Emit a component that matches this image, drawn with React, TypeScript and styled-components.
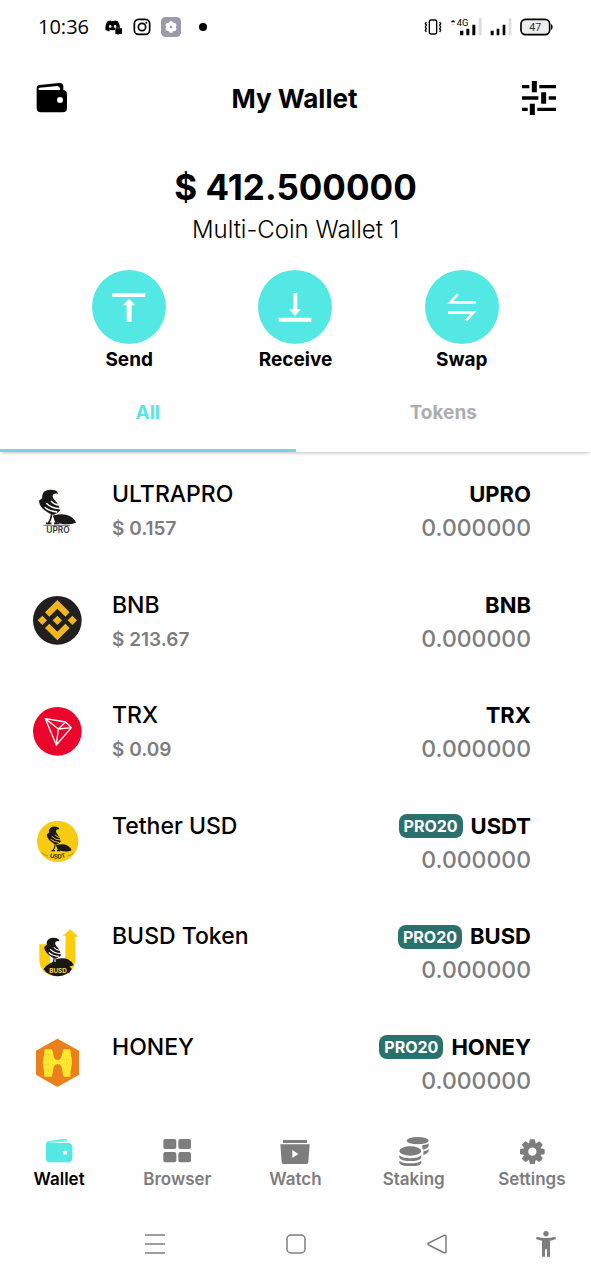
import React from "react";
import styled, { createGlobalStyle } from "styled-components";
import { FaDiscord } from "react-icons/fa";

const teal = "#54e8e4";
const grey = "#7d7d7d";

const GlobalStyle = createGlobalStyle`
  * { box-sizing: border-box; }
  body { margin: 0; background: #fefefe; color: #000; font-family: Inter, "Noto Sans", sans-serif; }
  button { font: inherit; color: inherit; background: none; border: 0; padding: 0; cursor: pointer; }
  svg { display: block; flex: none; }
`;

const Screen = styled.div`
  display: flex;
  flex-direction: column;
  min-height: 100vh;
`;

const StatusBar = styled.div`
  display: flex;
  align-items: center;
  justify-content: space-between;
  height: 54px;
  padding: 0 38px;
`;

const StatusGroup = styled.div<{ $gap: number }>`
  display: flex;
  align-items: center;
  gap: ${(p) => p.$gap}px;
`;

const Clock = styled.time`
  font-family: "Open Sans", sans-serif;
  font-size: 20px;
  line-height: 24px;
  margin-right: 6px;
`;

const Header = styled.header`
  display: flex;
  align-items: center;
  justify-content: space-between;
  height: 88px;
  padding: 0 34px 0 36px;
`;

const Title = styled.h1`
  margin: 0;
  padding-top: 2px;
  font-size: 26px;
  line-height: 32px;
  font-weight: 700;
`;

const Summary = styled.section`
  display: flex;
  flex-direction: column;
  align-items: center;
  padding-top: 20px;
`;

const Balance = styled.div`
  font-size: 35px;
  line-height: 50px;
  font-weight: 700;
`;

const WalletName = styled.div`
  font-size: 24px;
  line-height: 36px;
  font-weight: 300;
`;

const Actions = styled.div`
  display: grid;
  grid-template-columns: repeat(3, 1fr);
  padding: 22px 46px 0;
`;

const Action = styled.button`
  display: flex;
  flex-direction: column;
  align-items: center;
  font-size: 19px;
  line-height: 32px;
  font-weight: 700;
`;

const ActionDisc = styled.span`
  display: block;
  width: 74px;
  height: 74px;
  border-radius: 50%;
  background: ${teal};
`;

const Tabs = styled.div`
  display: grid;
  grid-template-columns: 1fr 1fr;
  height: 76px;
  box-shadow: 0 3px 3px -2px rgba(0, 0, 0, 0.25);
`;

const Tab = styled.button<{ $active?: boolean }>`
  padding-bottom: ${(p) => (p.$active ? 0 : 3)}px;
  border-bottom: ${(p) => (p.$active ? "3px solid #70d8d6" : "0")};
  color: ${(p) => (p.$active ? teal : "#adadad")};
  font-size: 19px;
  font-weight: 700;
`;

const TokenList = styled.ul`
  display: grid;
  grid-auto-rows: 1fr;
  flex: 1;
  margin: 0;
  padding: 3px 60px 0 33px;
  list-style: none;
`;

const TokenRow = styled.li`
  display: flex;
  align-items: center;
  min-height: 90px;
`;

const Details = styled.div<{ $end?: boolean }>`
  display: flex;
  flex-direction: column;
  align-items: ${(p) => (p.$end ? "flex-end" : "flex-start")};
  flex: ${(p) => (p.$end ? "none" : "1")};
  height: 68px;
  padding: 2px 0 0 ${(p) => (p.$end ? 0 : 30)}px;
`;

const TokenName = styled.div`
  font-size: 23px;
  line-height: 33px;
  font-weight: 500;
`;

const TokenPrice = styled.div`
  color: ${grey};
  font-size: 19px;
  line-height: 35px;
  font-weight: 600;
`;

const SymbolLine = styled.div`
  display: flex;
  align-items: center;
  gap: 8px;
  font-size: 22px;
  line-height: 33px;
  font-weight: 700;
`;

const Badge = styled.span`
  padding: 0 5px;
  border-radius: 8px;
  background: #2a716d;
  color: #fff;
  font-size: 16px;
  line-height: 24px;
  font-weight: 700;
`;

const Amount = styled.div`
  color: ${grey};
  font-size: 23px;
  line-height: 35px;
  font-weight: 500;
`;

const BottomNav = styled.nav`
  display: grid;
  grid-template-columns: repeat(5, 1fr);
  height: 90px;
  padding-top: 18px;
`;

const NavItem = styled.button<{ $active?: boolean }>`
  display: flex;
  flex-direction: column;
  align-items: center;
  align-self: start;
  color: ${(p) => (p.$active ? "#000" : grey)};
  font-size: 17px;
  line-height: 26px;
  font-weight: 600;
`;

const SystemNav = styled.div`
  display: grid;
  grid-template-columns: 84fr 141fr 141fr 141fr 84fr;
  height: 72px;
`;

const SystemButton = styled.button<{ $first?: boolean }>`
  display: flex;
  align-items: center;
  justify-content: center;
  grid-column-start: ${(p) => (p.$first ? 2 : "auto")};
  &:last-child { padding-right: 6px; }
`;

const VibrateIcon = () => (
  <svg width="18" height="18" viewBox="386 52 54 54" fill="none" stroke="#000" strokeWidth="4">
    <rect x="402" y="58" width="22" height="42" rx="5" />
    <path d="M393 64l-3 5 3 5-3 5 3 5-3 5 3 5M433 64l3 5-3 5 3 5-3 5 3 5-3 5" />
  </svg>
);

const MobileSignal = () => (
  <svg width="32" height="18" viewBox="461 52 96 54">
    <path d="M463 65l7-7 7 7z" />
    <path d="M463 70l7 6 7-6z" fill="#ddd" />
    <text x="481" y="76" fontFamily="Roboto, sans-serif" fontSize="28">4G</text>
    <path d="M491 90h10v14h-10zM510 84h9v20h-9zM528 72h9v32h-9z" />
    <path d="M547 53h9v51h-9z" fill="#ddd" />
  </svg>
);

const Signal = () => (
  <svg width="22" height="18" viewBox="583 52 66 54">
    <path d="M585 90h9v14h-9zM603 84h8v20h-8zM621 72h8v32h-8z" />
    <path d="M639 53h8v51h-8z" fill="#ddd" />
  </svg>
);

const Battery = () => (
  <svg width="33" height="18" viewBox="674 52 99 54">
    <rect x="677" y="56" width="86" height="46" rx="14" fill="#eee" stroke="#000" strokeWidth="5" />
    <path d="M767 70q5 2 5 9t-5 9z" />
    <text x="720" y="90" textAnchor="middle" fontFamily="Roboto, sans-serif" fontSize="32" fill="#333">47</text>
  </svg>
);

const NotificationIcons = () => (
  <>
    <svg width="18" height="18" viewBox="315 52 54 54">
      <FaDiscord x={314} y={52} size={48} />
      <path d="M346 83h20v17h-9l-4 4v-4h-7z" stroke="#fefefe" strokeWidth="3" paintOrder="stroke" />
    </svg>
    <svg width="18" height="18" viewBox="398 52 54 54" fill="none" stroke="#000" strokeWidth="5">
      <rect x="402" y="56" width="46" height="45" rx="13" />
      <circle cx="425" cy="79" r="11" />
      <circle cx="438" cy="66" r="3" fill="#000" stroke="none" />
    </svg>
    <svg width="20" height="20" viewBox="480 48 60 60">
      <rect x="480" y="48" width="60" height="60" rx="14" fill="#9b9ba7" />
      <g fill="#fff">
        <circle cx="510" cy="78" r="15" />
        {[0, 60, 120, 180, 240, 300].map((a) => (
          <circle key={a} cx="510" cy="66" r="6" transform={`rotate(${a} 510 78)`} />
        ))}
      </g>
      <circle cx="510" cy="78" r="4" fill="#9b9ba7" />
    </svg>
    <svg width="20" height="8" viewBox="0 0 20 8"><circle cx="12" cy="4" r="4" /></svg>
  </>
);

const WalletIcon = () => (
  <svg width="32" height="32" viewBox="108 248 96 96">
    <path d="M110 266q0-8 9-9l58-6q12-1 13 9v12q11 2 11 12v42q0 13-13 13h-65q-13 0-13-13z" />
    <path d="M119 265l53-5q7 0 8 8v4h-60q-5-1-5-4 1-3 4-3z" fill="#fefefe" />
    <circle cx="180" cy="302" r="9" fill="#fefefe" />
  </svg>
);

const TuneIcon = () => (
  <svg width="36" height="36" viewBox="676 240 108 108" fill="none" stroke="#000">
    <path strokeWidth="10" d="M679 260h22M731 260h50M679 294h49M759 294h22M679 328h17M725 328h56" />
    <path strokeWidth="15" d="M716 243v34M744 277v34M710 311v34" />
  </svg>
);

const SendIcon = () => (
  <svg width="74" height="74" viewBox="36 330 222 222" fill="#fff">
    <path d="M97 399h99v12H97zM147 416l19 20h-11v50h-15v-50h-11z" />
  </svg>
);

const ReceiveIcon = () => (
  <svg width="74" height="74" viewBox="536 330 222 222" fill="#fff">
    <path d="M598 473h98v12h-98zM641 399h13v49h11l-18 20-18-20h12z" />
  </svg>
);

const SwapIcon = () => (
  <svg width="74" height="74" viewBox="1035 330 222 222" fill="none" stroke="#fff" strokeWidth="8">
    <path d="M1187 427h-76l22-24M1104 458h76l-22 24" />
  </svg>
);

const Bird = ({ stripes }: { stripes: string }) => (
  <>
    <path
      fill="#191817"
      d="M174 68q-15-2-16 6-1 6 5 12 13 11 17 33-8 8-20 13-10-2-22-11-13-9-18-20-4-8-2-13 5-3 9-7-3-13 7-20 10-7 25-4 13 1 15 11z
         M158 134q32-9 51 1 15 8 19 20-12 5-26 5-22 0-32-8-8-7-12-18z"
    />
    <path d="M154 130q1 10-8 25M164 134q-1 12 6 22M138 157h16M162 157h16" fill="none" stroke="#191817" strokeWidth="5" />
    <path d="M139 97q16 16 41 16M134 109q16 13 38 14M153 90q8 10 22 12" fill="none" stroke={stripes} strokeWidth="4" />
  </>
);

const UproLogo = () => (
  <svg width="49" height="49" viewBox="99 45 147 147">
    <Bird stripes="#fefefe" />
    <path d="M130 163h80" stroke="#191817" strokeWidth="2" />
    <text x="174" y="185" textAnchor="middle" fontFamily="Inter, sans-serif" fontWeight="600" fontSize="25" fill="#333">UPRO</text>
  </svg>
);

const BnbLogo = () => (
  <svg width="49" height="49" viewBox="99 379 147 147">
    <circle cx="172" cy="452" r="73" fill="#211f20" />
    <path fill="#f0b51f" d="M172 391l37 37-13 13-24-24-24 24-13-13zM172 512l37-37-13-13-24 24-24-24-13 13zM172 438l14 14-14 14-14-14zM127 438l14 14-14 14-14-14zM217 438l14 14-14 14-14-14z" />
  </svg>
);

const TrxLogo = () => (
  <svg width="49" height="49" viewBox="99 51 147 147" fill="none" stroke="#fff" strokeWidth="4" strokeLinejoin="round">
    <circle cx="172" cy="124" r="73" fill="#e9052b" stroke="none" />
    <path d="M136 86l61 10 17 17-45 52zM136 86l39 31 22-21M175 117l39-4M175 117l-6 48" />
  </svg>
);

const UsdtLogo = () => (
  <svg width="49" height="49" viewBox="99 381 147 147">
    <circle cx="173" cy="454" r="62" fill="#f7cb12" />
    <g transform="translate(62 369) scale(0.67 0.72)"><Bird stripes="#f7cb12" /></g>
    <path id="usdt-arc" d="M132 492q41 28 82 0" fill="none" />
    <text fontFamily="Inter, sans-serif" fontWeight="700" fontSize="18" fill="#3b3210" textAnchor="middle">
      <textPath href="#usdt-arc" startOffset="50%">USDT</textPath>
    </text>
    <path d="M126 489q10 7 18 10M220 489q-8 7-17 9" fill="none" stroke="#8a7312" strokeWidth="2" />
  </svg>
);

const BusdLogo = () => (
  <svg width="49" height="49" viewBox="99 53 147 147">
    <path d="M118 102h78V79h-10l24-22 25 22h-9v68q-2 48-53 51-53-3-55-50z" fill="#fbcd0b" />
    <path d="M150 76h46v80h-46z" fill="#fefefe" />
    <path d="M131 176q13-20 42-23 28 2 42 23-14 21-42 22-28-1-42-22z" fill="#191817" />
    <g transform="translate(39 36) scale(0.8 0.83)"><Bird stripes="#fefefe" /></g>
    <path d="M131 176q41-30 84 0l-8 12h-66z" fill="#191817" />
    <text x="174" y="189" textAnchor="middle" fontFamily="Inter, sans-serif" fontWeight="700" fontSize="19" fill="#fbdc5b">BUSD</text>
  </svg>
);

const HoneyLogo = () => (
  <svg width="49" height="49" viewBox="99 384 147 147">
    <path d="M172 386l65 36v72l-65 37-64-37v-72z" fill="#eb801b" />
    <path d="M134 418h22q3 8 5 20 2 12 12 12t12-12q2-12 5-20h21q0 14 4 27 2 14-1 27-3 14-3 28h-20q-3-8-5-24-2-14-13-14t-13 14q-2 16-5 24h-22q0-15-3-28-3-14 0-27 4-13 4-27z" fill="#fee92f" />
    <path d="M135 434h19M132 449h29M132 465h81M186 449h27M132 480h22M192 480h21M144 422v74M202 422v74" stroke="#f4c928" strokeWidth="2" strokeDasharray="3 3" />
  </svg>
);

const NavWalletIcon = () => (
  <svg width="30" height="30" viewBox="127 48 90 90">
    <path d="M133 73q0-8 8-10l46-6q8-1 11 7l-55 5h57q12 1 12 12v34q0 11-12 12h-54q-13 0-13-11z" fill={teal} />
    <path d="M142 67l51-5" stroke="#b8f5f3" strokeWidth="2" />
    <path d="M190 90l3 4 6 1-4 4 1 6-6-2-5 2 1-6-4-4 6-1z" fill="#fff" />
  </svg>
);

const GridIcon = () => (
  <svg width="30" height="30" viewBox="488 45 90 90" fill={grey}>
    <rect x="492" y="54" width="39" height="30" rx="6" /><rect x="537" y="54" width="38" height="30" rx="6" />
    <rect x="492" y="93" width="39" height="31" rx="6" /><rect x="537" y="93" width="38" height="31" rx="6" />
  </svg>
);

const WatchIcon = () => (
  <svg width="32" height="30" viewBox="0 0 96 90" fill={grey}>
    <path d="M12 12h72v9H12zM4 25h88l-4 54q0 5-5 5H13q-5 0-5-5z" />
    <path d="M40 42l18 12-18 12z" fill="#fefefe" />
  </svg>
);

const CoinsIcon = () => (
  <svg width="32" height="30" viewBox="305 45 96 90" fill={grey}>
    <ellipse cx="364" cy="59" rx="33" ry="11" />
    <path d="M378 73q15-2 19-6v7q-2 9-19 12zM381 91q12-2 16-7v7q-2 7-16 11z" />
    <ellipse cx="342" cy="90" rx="39" ry="18" fill="#fefefe" />
    <ellipse cx="342" cy="90" rx="33" ry="14" />
    <path d="M309 103q8 9 33 9t33-9v7q-5 10-33 10t-33-10zM309 119q8 8 33 8t33-8v7q-5 10-33 10t-33-10z" />
  </svg>
);

const GearIcon = () => (
  <svg width="30" height="30" viewBox="661 45 90 90" fill={grey}>
    {[0, 45, 90, 135, 180, 225, 270, 315].map((a) => (
      <path key={a} d="M697 68l2-11q0-2 3-2h10q3 0 3 2l2 11z" transform={`rotate(${a} 707 92)`} />
    ))}
    <circle cx="707" cy="92" r="20" fill="none" stroke={grey} strokeWidth="15" />
  </svg>
);

const tokens = [
  { name: "ULTRAPRO", price: "$ 0.157", symbol: "UPRO", logo: <UproLogo /> },
  { name: "BNB", price: "$ 213.67", symbol: "BNB", logo: <BnbLogo /> },
  { name: "TRX", price: "$ 0.09", symbol: "TRX", logo: <TrxLogo /> },
  { name: "Tether USD", symbol: "USDT", badge: "PRO20", logo: <UsdtLogo /> },
  { name: "BUSD Token", symbol: "BUSD", badge: "PRO20", logo: <BusdLogo /> },
  { name: "HONEY", symbol: "HONEY", badge: "PRO20", logo: <HoneyLogo /> },
];

const actions = [
  { label: "Send", icon: <SendIcon /> },
  { label: "Receive", icon: <ReceiveIcon /> },
  { label: "Swap", icon: <SwapIcon /> },
];

const navItems = [
  { label: "Wallet", icon: <NavWalletIcon /> },
  { label: "Browser", icon: <GridIcon /> },
  { label: "Watch", icon: <WatchIcon /> },
  { label: "Staking", icon: <CoinsIcon /> },
  { label: "Settings", icon: <GearIcon /> },
];

export default function App() {
  return (
    <Screen>
      <GlobalStyle />
      <StatusBar>
        <StatusGroup $gap={10}>
          <Clock>10:36</Clock>
          <NotificationIcons />
        </StatusGroup>
        <StatusGroup $gap={8}>
          <VibrateIcon />
          <MobileSignal />
          <Signal />
          <Battery />
        </StatusGroup>
      </StatusBar>
      <Header>
        <button aria-label="Wallets"><WalletIcon /></button>
        <Title>My Wallet</Title>
        <button aria-label="Filters"><TuneIcon /></button>
      </Header>
      <Summary>
        <Balance>$ 412.500000</Balance>
        <WalletName>Multi-Coin Wallet 1</WalletName>
      </Summary>
      <Actions>
        {actions.map((a) => (
          <Action key={a.label}>
            <ActionDisc>{a.icon}</ActionDisc>
            {a.label}
          </Action>
        ))}
      </Actions>
      <Tabs role="tablist">
        <Tab role="tab" aria-selected="true" $active>All</Tab>
        <Tab role="tab" aria-selected="false">Tokens</Tab>
      </Tabs>
      <TokenList>
        {tokens.map((t) => (
          <TokenRow key={t.symbol}>
            {t.logo}
            <Details>
              <TokenName>{t.name}</TokenName>
              {t.price && <TokenPrice>{t.price}</TokenPrice>}
            </Details>
            <Details $end>
              <SymbolLine>
                {t.badge && <Badge>{t.badge}</Badge>}
                {t.symbol}
              </SymbolLine>
              <Amount>0.000000</Amount>
            </Details>
          </TokenRow>
        ))}
      </TokenList>
      <BottomNav>
        {navItems.map((n, i) => (
          <NavItem key={n.label} $active={i === 0}>
            {n.icon}
            {n.label}
          </NavItem>
        ))}
      </BottomNav>
      <SystemNav>
        <SystemButton $first aria-label="Recent apps">
          <svg width="20" height="20" viewBox="0 0 20 20" stroke={grey} strokeWidth="1.5"><path d="M0 1h20M0 10h20M0 19h20" /></svg>
        </SystemButton>
        <SystemButton aria-label="Home">
          <svg width="20" height="20" viewBox="0 0 20 20" fill="none" stroke={grey} strokeWidth="1.5"><rect x="1" y="1" width="18" height="18" rx="4" /></svg>
        </SystemButton>
        <SystemButton aria-label="Back">
          <svg width="20" height="20" viewBox="0 0 20 20" fill="none" stroke={grey} strokeWidth="1.5"><path d="M17 1.3L1.8 9q-1.6 1 0 2L17 18.7q2 .6 2-1.3V2.600q0-1.900-2-1.300z" /></svg>
        </SystemButton>
        <SystemButton aria-label="Accessibility">
          <svg width="20" height="26" viewBox="0 0 60 78" fill={grey}>
            <circle cx="30" cy="8" r="8" />
            <path d="M2 17q28 8 56 0l2 7q-9 4-18 5v48H33V55h-6v22H18V29Q9 28 0 24z" />
          </svg>
        </SystemButton>
      </SystemNav>
    </Screen>
  );
}
